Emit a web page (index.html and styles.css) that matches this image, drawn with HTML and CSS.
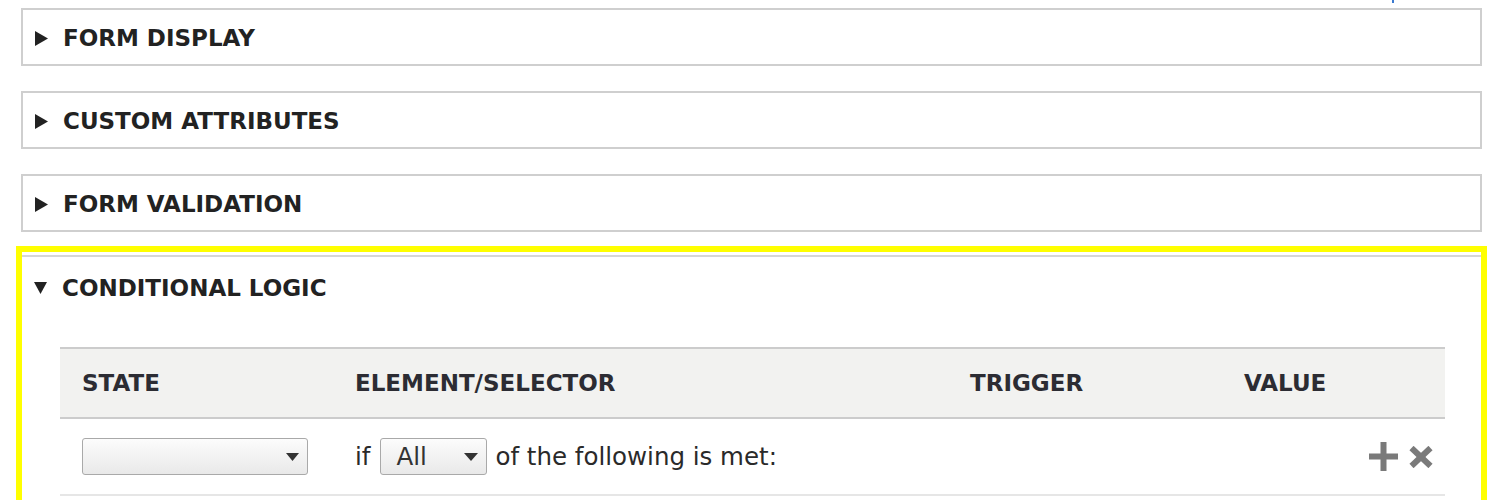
FILE: index.html
```html
<!DOCTYPE html>
<html lang="en">
<head>
<meta charset="utf-8">
<title>Conditional logic</title>
<link rel="stylesheet" href="styles.css">
</head>
<body>
<div class="topbar"><span class="link-tick"></span></div>

<div class="sections">
  <div class="section">
    <svg class="tri" width="13" height="15" viewBox="0 0 13 15"><polygon points="0,0 13,7.5 0,15" fill="#222"/></svg>
    <span class="legend">FORM DISPLAY</span>
  </div>
  <div class="section">
    <svg class="tri" width="13" height="15" viewBox="0 0 13 15"><polygon points="0,0 13,7.5 0,15" fill="#222"/></svg>
    <span class="legend">CUSTOM ATTRIBUTES</span>
  </div>
  <div class="section">
    <svg class="tri" width="13" height="15" viewBox="0 0 13 15"><polygon points="0,0 13,7.5 0,15" fill="#222"/></svg>
    <span class="legend">FORM VALIDATION</span>
  </div>
</div>

<div class="highlight">
  <div class="open-section">
    <div class="open-title">
      <svg class="tri-down" width="13" height="12" viewBox="0 0 13 12"><polygon points="0,0 13,0 6.5,12" fill="#222"/></svg>
      <span class="legend">CONDITIONAL LOGIC</span>
    </div>
    <div class="table">
      <div class="thead">
        <div class="th">STATE</div>
        <div class="th">ELEMENT/SELECTOR</div>
        <div class="th">TRIGGER</div>
        <div class="th">VALUE</div>
      </div>
      <div class="trow">
        <div class="td">
          <div class="select select-state"><span class="sel-text"></span>
            <svg class="sel-arrow" width="13" height="8" viewBox="0 0 13 8"><polygon points="0,0 13,0 6.5,8" fill="#333"/></svg>
          </div>
        </div>
        <div class="td">
          <span class="row-text">if</span>
          <div class="select select-all"><span class="sel-text">All</span>
            <svg class="sel-arrow" width="14" height="8" viewBox="0 0 14 8"><polygon points="0,0 14,0 7,8" fill="#333"/></svg>
          </div>
          <span class="row-text">of the following is met:</span>
        </div>
        <div class="td td-actions">
          <svg class="icon-plus" width="29" height="29" viewBox="0 0 29 29"><rect x="0" y="11.5" width="29" height="6" fill="#7a7a7a"/><rect x="11.5" y="0" width="6" height="29" fill="#7a7a7a"/></svg>
          <svg class="icon-x" width="24" height="22" viewBox="0 0 24 22"><line x1="2.5" y1="2" x2="21.5" y2="20" stroke="#7a7a7a" stroke-width="6"/><line x1="21.5" y1="2" x2="2.5" y2="20" stroke="#7a7a7a" stroke-width="6"/></svg>
        </div>
      </div>
    </div>
  </div>
</div>
</body>
</html>
```

FILE: styles.css
```css
html, body {
  margin: 0;
  padding: 0;
  background: #ffffff;
  font-family: "DejaVu Sans", "Liberation Sans", sans-serif;
  color: #222;
  overflow: hidden;
}

.topbar {
  height: 8px;
  display: flex;
  justify-content: flex-end;
  padding-right: 106px;
}

.link-tick {
  display: block;
  width: 2px;
  height: 3px;
  background: #3b7ad0;
}

.sections {
  display: flex;
  flex-direction: column;
  gap: 25px;
  padding-left: 21px;
}

.section {
  box-sizing: border-box;
  width: 1461px;
  height: 58px;
  border: 2px solid #cfcfcf;
  display: flex;
  align-items: center;
  padding: 3px 0 0 12px;
}

.tri {
  flex: none;
  margin-right: 15px;
}

.legend {
  font-size: 23px;
  font-weight: bold;
  color: #222;
  line-height: 1;
}

.highlight {
  box-sizing: border-box;
  margin: 14px 0 0 16px;
  width: 1471px;
  height: 300px;
  border: 6px solid #ffff00;
  border-bottom: none;
  padding-top: 3px;
}

.open-section {
  border-top: 2px solid #d6d6d6;
}

.open-title {
  display: flex;
  align-items: center;
  padding: 21px 0 0 12px;
  height: 20px;
}

.tri-down {
  flex: none;
  margin-right: 15px;
}

.table {
  margin: 49px 36px 0 38px;
}

.thead {
  display: grid;
  grid-template-columns: 273px 615px 274px 1fr;
  height: 68px;
  align-items: center;
  background: #f2f2f0;
  border-top: 2px solid #cccccc;
  border-bottom: 2px solid #cccccc;
}

.th {
  padding-left: 22px;
  font-size: 23px;
  font-weight: bold;
  color: #2c2c33;
}

.trow {
  display: grid;
  grid-template-columns: 273px 889px 1fr;
  height: 75px;
  align-items: center;
  border-bottom: 2px solid #e6e6e6;
}

.td {
  padding-left: 22px;
  display: flex;
  align-items: center;
}

.td-actions {
  justify-content: flex-end;
  padding-right: 12px;
  gap: 11px;
}

.select {
  box-sizing: border-box;
  height: 37px;
  border: 1px solid #a9a9a9;
  border-radius: 3px;
  background: linear-gradient(#fcfcfc, #e9e9e9);
  display: flex;
  align-items: center;
  justify-content: space-between;
  padding: 0 8px 0 15px;
}

.select-state {
  width: 226px;
}

.select-all {
  width: 107px;
  margin: 0 8px 0 10px;
}

.sel-text {
  font-size: 24.5px;
  color: #333;
}

.sel-arrow {
  flex: none;
}

.row-text {
  font-size: 24.5px;
  color: #2a2a2a;
}

.icon-plus, .icon-x {
  flex: none;
}
```
